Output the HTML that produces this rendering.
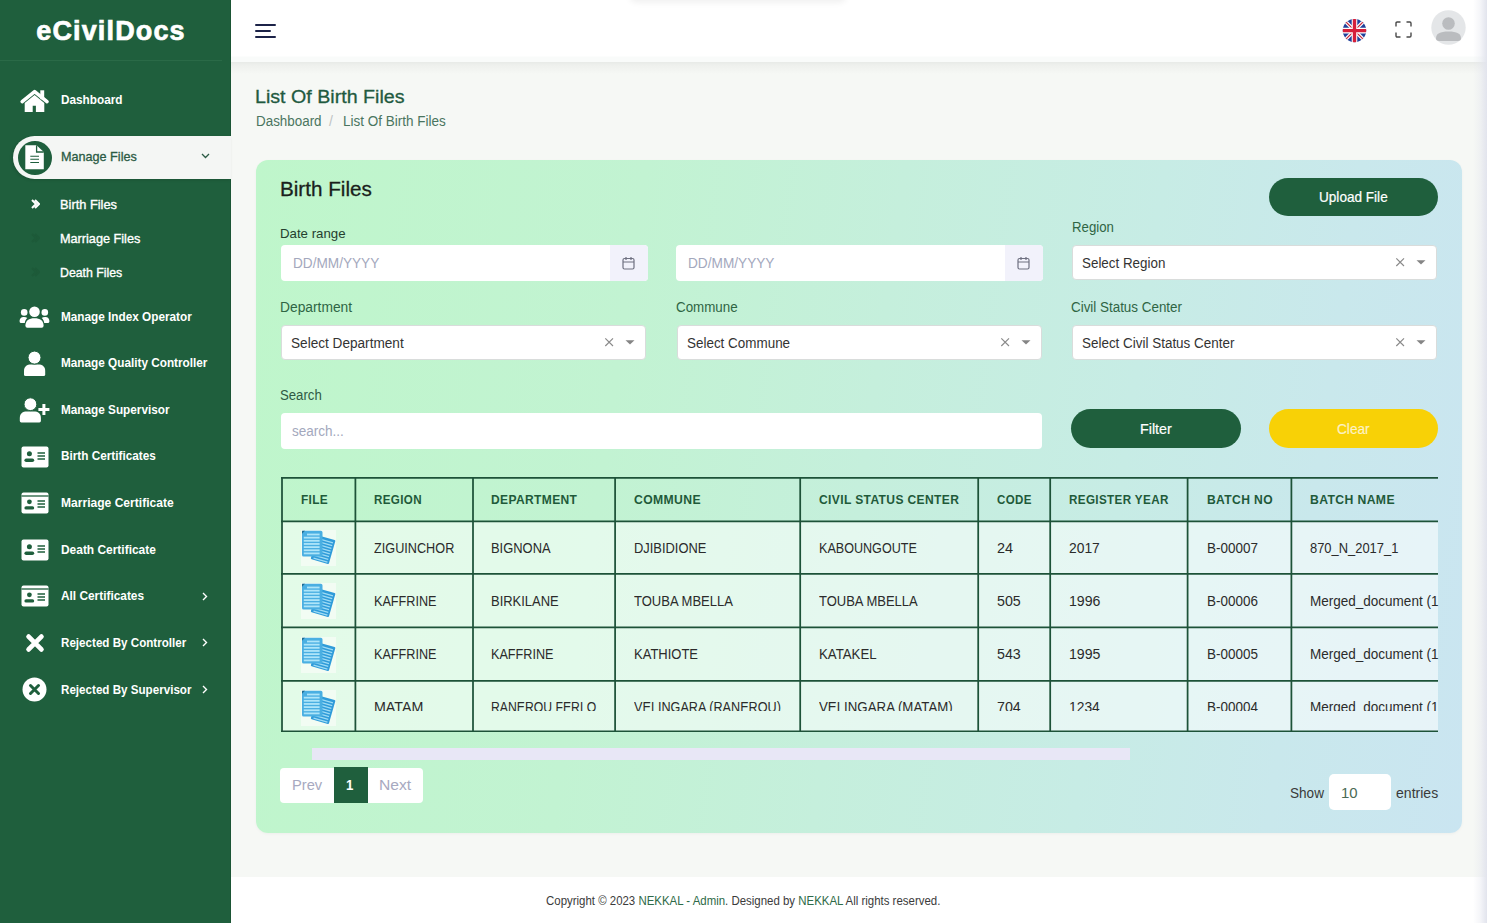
<!DOCTYPE html>
<html><head><meta charset="utf-8">
<style>
*{box-sizing:border-box;margin:0;padding:0}
html,body{width:1487px;height:923px;overflow:hidden;font-family:"Liberation Sans",sans-serif;background:#f6f8f5}
.abs{position:absolute}
#sb{position:absolute;left:0;top:0;width:231px;height:923px;background:#1f5f3d;border-right:1px solid #1b5535}
#logo{position:absolute;left:0;top:0;width:222px;height:61px;border-bottom:1px solid #2a6a47;color:#fff;font-weight:bold;font-size:27px;text-align:center;line-height:63px;letter-spacing:1.15px;-webkit-text-stroke:0.7px #fff}
.mi{position:absolute;left:61px;color:#fff;font-weight:bold;font-size:13px;white-space:nowrap;line-height:16px;transform:scaleX(0.905);transform-origin:0 0}
.sub{position:absolute;left:60px;color:#fff;font-size:13px;white-space:nowrap;line-height:16px;-webkit-text-stroke:0.35px #fff;transform-origin:0 0}
.ic{position:absolute}
#hdr{position:absolute;left:231px;top:0;width:1256px;height:62px;background:linear-gradient(#fff 0,#fff 56px,#f9fbfa 57px,#f9fbfa 62px)}
#hsh{position:absolute;left:231px;top:62px;width:1256px;height:12px;background:linear-gradient(#e7eae7,#eef0ed 3px,#f6f8f5 12px)}
#rstrip{position:absolute;left:1473px;top:0;width:14px;height:923px;background:linear-gradient(90deg,rgba(226,228,237,0),rgba(226,228,237,0.35) 50%,#e2e4ed)}
#card{position:absolute;left:256px;top:160px;width:1206px;height:673px;border-radius:12px;box-shadow:0 1px 3px rgba(0,0,0,0.04);background:linear-gradient(98deg,#bff6cb 0%,#c2f3d2 30%,#c5efdc 50%,#c7ece5 70%,#c9e8ec 85%,#cae5f1 100%)}
.lbl{position:absolute;font-size:14px;color:#2d5a3f;white-space:nowrap;line-height:16px}
.inp{position:absolute;background:#fff;border-radius:4px;height:36px}
.ph{position:absolute;font-size:14px;color:#a3a8bd;line-height:16px;white-space:nowrap}
.sel{position:absolute;background:#fff;border-radius:4px;height:35px;border:1px solid #d9dcdb}
.seltx{position:absolute;left:10px;top:9px;font-size:14px;color:#333;line-height:16px;white-space:nowrap}
.btn{position:absolute;border-radius:20px;color:#fff;font-size:14px;text-align:center;white-space:nowrap}
#tbl{position:absolute;left:281px;top:477px;width:1157px;height:255px;overflow:hidden}
.t{position:absolute;white-space:nowrap;transform-origin:0 0}
#foot{position:absolute;z-index:-0;left:231px;top:877px;width:1256px;height:46px;background:#fff}
</style></head><body>
<div id="sb">
  <div id="logo">eCivilDocs</div>
  <!-- dashboard -->
  <svg class="ic" style="left:16px;top:85px" width="36" height="32" viewBox="0 0 36 32"><rect x="24.3" y="5.3" width="3.9" height="9" fill="#fff"/><path d="M6.2 16.6 L18.6 6.6 L31 16.6" fill="none" stroke="#fff" stroke-width="3.6" stroke-linecap="round" stroke-linejoin="round"/><path d="M8.7 17.9 L18.6 10 L28.3 17.9 V27 H19.9 V20.8 H16.7 V27 H8.7 Z" fill="#fff"/></svg>
  <div class="mi" style="top:92px">Dashboard</div>
  <!-- manage files active -->
  <div class="abs" style="left:13px;top:136px;width:218px;height:43px;background:#f4f6f4;border-radius:22px 0 0 22px;box-shadow:-1px 1px 3px rgba(0,0,0,0.15)"></div>
  <div class="abs" style="left:17.8px;top:140.8px;width:33.8px;height:33.8px;border-radius:50%;background:#1f5f3d"></div>
  <svg class="ic" style="left:24px;top:144px" width="21" height="27" viewBox="0 0 21 27"><path d="M1.3 1.2 H12.6 L19.8 8 V25.3 H1.3 Z" fill="#fff"/><path d="M12.6 1.2 V8 H19.8" fill="none" stroke="#1f5f3d" stroke-width="1.3"/><path d="M6.3 12.2 H15 M6.3 15.2 H15 M6.3 18.5 H15" stroke="#1f5f3d" stroke-width="1.1"/></svg>
  <div class="mi" style="top:149px;color:#2b5b44;font-weight:normal;-webkit-text-stroke:0.3px #2b5b44;transform:scaleX(0.971)">Manage Files</div>
  <svg class="ic" style="left:201px;top:153px" width="9" height="6" viewBox="0 0 9 6"><path d="M1 1 L4.5 4.5 L8 1" fill="none" stroke="#2b5b44" stroke-width="1.3"/></svg>
  <!-- sub -->
  <svg class="ic" style="left:31px;top:199px" width="9" height="10" viewBox="0 0 9 10"><path d="M1 1 L5 5 L1 9 M4 1 L8 5 L4 9" fill="none" stroke="#fff" stroke-width="2"/></svg>
  <div class="sub" style="top:197px;transform:scaleX(0.985)">Birth Files</div>
  <svg class="ic" style="left:31px;top:233px" width="9" height="10" viewBox="0 0 9 10"><path d="M1 1 L5 5 L1 9 M4 1 L8 5 L4 9" fill="none" stroke="#1d5a39" stroke-width="2"/></svg>
  <div class="sub" style="top:231px;transform:scaleX(0.975)">Marriage Files</div>
  <svg class="ic" style="left:31px;top:267px" width="9" height="10" viewBox="0 0 9 10"><path d="M1 1 L5 5 L1 9 M4 1 L8 5 L4 9" fill="none" stroke="#1d5a39" stroke-width="2"/></svg>
  <div class="sub" style="top:265px;transform:scaleX(0.946)">Death Files</div>
  <!-- users -->
  <svg class="ic" style="left:19px;top:305px" width="31" height="24" viewBox="0 0 31 24"><circle cx="15.5" cy="6.7" r="5.3" fill="#fff"/><path d="M6.4 20.7 C6.4 15.5 10 13.2 15.5 13.2 C21 13.2 24.6 15.5 24.6 20.7 Q24.6 22.7 22.6 22.7 H8.4 Q6.4 22.7 6.4 20.7 Z" fill="#fff"/><circle cx="5.2" cy="7.4" r="3.3" fill="#fff"/><circle cx="25.8" cy="7.4" r="3.3" fill="#fff"/><path d="M0.6 16.5 C0.6 13.2 2.3 12 5 12 C6.4 12 7.5 12.3 8.3 13 C6.8 14.3 6 15.8 5.8 18.1 H2.2 Q0.6 18.1 0.6 16.5 Z" fill="#fff"/><path d="M30.4 16.5 C30.4 13.2 28.7 12 26 12 C24.6 12 23.5 12.3 22.7 13 C24.2 14.3 25 15.8 25.2 18.1 H28.8 Q30.4 18.1 30.4 16.5 Z" fill="#fff"/></svg>
  <div class="mi" style="top:309px">Manage Index Operator</div>
  <!-- user -->
  <svg class="ic" style="left:23px;top:351px" width="23" height="26" viewBox="0 0 23 26"><path d="M1 20 C1 15.5 4 13.6 8 13.6 H15.2 C19.2 13.6 22.2 15.5 22.2 20 V23.5 Q22.2 25 20.7 25 H2.5 Q1 25 1 23.5 Z" fill="#fff"/><circle cx="11.5" cy="6.6" r="6.5" fill="#fff" stroke="#1f5f3d" stroke-width="1"/></svg>
  <div class="mi" style="top:355px">Manage Quality Controller</div>
  <!-- user plus -->
  <svg class="ic" style="left:19px;top:397px" width="32" height="27" viewBox="0 0 32 27"><path d="M0.8 21 C0.8 16.4 3.8 14.5 7.8 14.5 H14.9 C18.9 14.5 21.9 16.4 21.9 21 V24 Q21.9 25.4 20.4 25.4 H2.3 Q0.8 25.4 0.8 24 Z" fill="#fff"/><circle cx="11.4" cy="7.2" r="6.4" fill="#fff" stroke="#1f5f3d" stroke-width="1"/><path d="M24.9 7 V18 M19.4 12.5 H30.4" stroke="#fff" stroke-width="3"/></svg>
  <div class="mi" style="top:402px">Manage Supervisor</div>
  <!-- id cards -->
  <svg class="ic" style="left:21px;top:446px" width="28" height="22" viewBox="0 0 28 22"><rect x="0.5" y="0.5" width="27" height="21" rx="2" fill="#fff"/><circle cx="8.4" cy="7.8" r="2.5" fill="#1f5f3d"/><rect x="3.4" y="12.5" width="9.8" height="3.6" rx="1.8" fill="#1f5f3d"/><path d="M16.5 7 H24 M16.5 10 H24 M16.5 13 H24" stroke="#1f5f3d" stroke-width="1.4"/></svg>
  <div class="mi" style="top:448px">Birth Certificates</div>
  <svg class="ic" style="left:21px;top:492px" width="28" height="22" viewBox="0 0 28 22"><rect x="0.5" y="0.5" width="27" height="21" rx="2" fill="#fff"/><path d="M0.5 4 H27.5" stroke="#1f5f3d" stroke-width="1.3"/><circle cx="8.4" cy="9.8" r="2.4" fill="#1f5f3d"/><rect x="3.4" y="14.2" width="9.8" height="3.4" rx="1.7" fill="#1f5f3d"/><path d="M16.5 9 H24 M16.5 12 H24 M16.5 15 H24" stroke="#1f5f3d" stroke-width="1.4"/></svg>
  <div class="mi" style="top:495px;transform:scaleX(0.928)">Marriage Certificate</div>
  <svg class="ic" style="left:21px;top:539px" width="28" height="22" viewBox="0 0 28 22"><rect x="0.5" y="0.5" width="27" height="21" rx="2" fill="#fff"/><circle cx="8.4" cy="7.8" r="2.5" fill="#1f5f3d"/><rect x="3.4" y="12.5" width="9.8" height="3.6" rx="1.8" fill="#1f5f3d"/><path d="M16.5 7 H24 M16.5 10 H24 M16.5 13 H24" stroke="#1f5f3d" stroke-width="1.4"/></svg>
  <div class="mi" style="top:542px;transform:scaleX(0.918)">Death Certificate</div>
  <svg class="ic" style="left:21px;top:585px" width="28" height="22" viewBox="0 0 28 22"><rect x="0.5" y="0.5" width="27" height="21" rx="2" fill="#fff"/><path d="M0.5 4 H27.5" stroke="#1f5f3d" stroke-width="1.3"/><circle cx="8.4" cy="9.8" r="2.4" fill="#1f5f3d"/><rect x="3.4" y="14.2" width="9.8" height="3.4" rx="1.7" fill="#1f5f3d"/><path d="M16.5 9 H24 M16.5 12 H24 M16.5 15 H24" stroke="#1f5f3d" stroke-width="1.4"/></svg>
  <div class="mi" style="top:588px;transform:scaleX(0.912)">All Certificates</div>
  <svg class="ic" style="left:202px;top:592px" width="6" height="9" viewBox="0 0 6 9"><path d="M1 1 L4.5 4.5 L1 8" fill="none" stroke="#fff" stroke-width="1.4"/></svg>
  <svg class="ic" style="left:25px;top:633px" width="20" height="20" viewBox="0 0 20 20"><path d="M3.6 3.6 L16.4 16.4 M16.4 3.6 L3.6 16.4" stroke="#fff" stroke-width="4.8" stroke-linecap="round"/></svg>
  <div class="mi" style="top:635px;transform:scaleX(0.894)">Rejected By Controller</div>
  <svg class="ic" style="left:202px;top:638px" width="6" height="9" viewBox="0 0 6 9"><path d="M1 1 L4.5 4.5 L1 8" fill="none" stroke="#fff" stroke-width="1.4"/></svg>
  <svg class="ic" style="left:22px;top:677px" width="25" height="25" viewBox="0 0 25 25"><circle cx="12.5" cy="12.5" r="12" fill="#fff"/><path d="M8.5 8.5 L16.5 16.5 M16.5 8.5 L8.5 16.5" stroke="#1f5f3d" stroke-width="3" stroke-linecap="round"/></svg>
  <div class="mi" style="top:682px;transform:scaleX(0.894)">Rejected By Supervisor</div>
  <svg class="ic" style="left:202px;top:685px" width="6" height="9" viewBox="0 0 6 9"><path d="M1 1 L4.5 4.5 L1 8" fill="none" stroke="#fff" stroke-width="1.4"/></svg>
</div>
<div id="hsh"></div><div id="hdr"></div>
<div class="abs" style="left:630px;top:-12px;width:216px;height:12px;border-radius:8px;box-shadow:0 2px 7px rgba(0,0,0,0.07);background:#fff"></div>
<svg class="abs" style="left:255px;top:23px" width="21" height="16" viewBox="0 0 21 16"><path d="M1 2 H20 M1 8 H15 M1 14 H20" stroke="#1c2348" stroke-width="2" stroke-linecap="round"/></svg>
<svg class="abs" style="left:1342px;top:18px" width="25" height="25" viewBox="0 0 25 25"><defs><clipPath id="fc"><circle cx="12.5" cy="12.6" r="11.7"/></clipPath></defs><g clip-path="url(#fc)"><rect width="25" height="25" fill="#21409a"/><path d="M0 0 L25 25 M25 0 L0 25" stroke="#fff" stroke-width="3.6"/><path d="M0 0 L25 25 M25 0 L0 25" stroke="#c8283e" stroke-width="1.2"/><path d="M12.5 0 V25 M0 12.6 H25" stroke="#fff" stroke-width="5.6"/><path d="M12.5 0 V25 M0 12.6 H25" stroke="#d61f3a" stroke-width="3.4"/></g></svg>
<svg class="abs" style="left:1395px;top:21px" width="17" height="17" viewBox="0 0 17 17"><path d="M1 5.5 V2.2 Q1 1 2.2 1 H5.5 M11.5 1 H14.8 Q16 1 16 2.2 V5.5 M16 11.5 V14.8 Q16 16 14.8 16 H11.5 M5.5 16 H2.2 Q1 16 1 14.8 V11.5" fill="none" stroke="#4a4a4a" stroke-width="1.4"/></svg>
<svg class="abs" style="left:1431px;top:10px" width="35" height="35" viewBox="0 0 35 35"><circle cx="17.5" cy="17.5" r="17.2" fill="#e4e6e8"/><circle cx="17.5" cy="13.5" r="6.3" fill="#babcbf"/><path d="M5 28.5 C5 23.5 9 21.5 17.5 21.5 C26 21.5 30 23.5 30 28.5 C30 30 29 31 27 31 H8 C6 31 5 30 5 28.5 Z" fill="#babcbf"/></svg>
<div id="foot"></div>
<div id="card"></div>
<div class="abs" style="left:1269px;top:178px;width:169px;height:38px;border-radius:19px;background:#1f5f3d"></div>
<!-- date inputs -->
<div class="abs" style="left:281px;top:245px;width:367px;height:36px;border-radius:4px;background:#fff;overflow:hidden"><div class="abs" style="left:329px;top:0;width:38px;height:36px;background:#f2f2fb"></div></div>
<svg class="abs" style="left:622px;top:256px" width="13" height="14" viewBox="0 0 13 14"><rect x="1" y="2.5" width="11" height="10.5" rx="1.5" fill="none" stroke="#6e7080" stroke-width="1.2"/><path d="M1 6 H12 M4 1 V4 M9 1 V4" stroke="#6e7080" stroke-width="1.2"/></svg>
<div class="abs" style="left:676px;top:245px;width:367px;height:36px;border-radius:4px;background:#fff;overflow:hidden"><div class="abs" style="left:329px;top:0;width:38px;height:36px;background:#f2f2fb"></div></div>
<svg class="abs" style="left:1017px;top:256px" width="13" height="14" viewBox="0 0 13 14"><rect x="1" y="2.5" width="11" height="10.5" rx="1.5" fill="none" stroke="#6e7080" stroke-width="1.2"/><path d="M1 6 H12 M4 1 V4 M9 1 V4" stroke="#6e7080" stroke-width="1.2"/></svg>
<!-- selects -->
<div class="sel" style="left:1072px;top:245px;width:365px;height:35px"></div>
<div class="sel" style="left:281px;top:325px;width:365px;height:35px"></div>
<div class="sel" style="left:677px;top:325px;width:365px;height:35px"></div>
<div class="sel" style="left:1072px;top:325px;width:365px;height:35px"></div>
<svg class="abs" style="left:1394px;top:256px" width="12" height="12" viewBox="0 0 12 12"><path d="M2.3 2.3 L10 10 M10 2.3 L2.3 10" stroke="#8a8a8a" stroke-width="1.15"/></svg><svg class="abs" style="left:1416px;top:260px" width="10" height="5" viewBox="0 0 10 5"><path d="M0.5 0.3 H9.5 L5 4.6 Z" fill="#858585"/></svg><svg class="abs" style="left:603px;top:336px" width="12" height="12" viewBox="0 0 12 12"><path d="M2.3 2.3 L10 10 M10 2.3 L2.3 10" stroke="#8a8a8a" stroke-width="1.15"/></svg><svg class="abs" style="left:625px;top:340px" width="10" height="5" viewBox="0 0 10 5"><path d="M0.5 0.3 H9.5 L5 4.6 Z" fill="#858585"/></svg><svg class="abs" style="left:999px;top:336px" width="12" height="12" viewBox="0 0 12 12"><path d="M2.3 2.3 L10 10 M10 2.3 L2.3 10" stroke="#8a8a8a" stroke-width="1.15"/></svg><svg class="abs" style="left:1021px;top:340px" width="10" height="5" viewBox="0 0 10 5"><path d="M0.5 0.3 H9.5 L5 4.6 Z" fill="#858585"/></svg><svg class="abs" style="left:1394px;top:336px" width="12" height="12" viewBox="0 0 12 12"><path d="M2.3 2.3 L10 10 M10 2.3 L2.3 10" stroke="#8a8a8a" stroke-width="1.15"/></svg><svg class="abs" style="left:1416px;top:340px" width="10" height="5" viewBox="0 0 10 5"><path d="M0.5 0.3 H9.5 L5 4.6 Z" fill="#858585"/></svg>
<!-- search -->
<div class="abs" style="left:281px;top:413px;width:761px;height:36px;border-radius:4px;background:#fff"></div>
<div class="abs" style="left:1071px;top:409px;width:170px;height:39px;border-radius:20px;background:#1f5f3d"></div>
<div class="abs" style="left:1269px;top:409px;width:169px;height:39px;border-radius:20px;background:#f8d106"></div>
<!-- table -->
<div class="abs" style="left:281px;top:477px;width:1157px;height:255px;overflow:hidden">
  <div class="abs" style="left:0;top:44px;width:1157px;height:210px;background:rgba(255,255,255,0.55)"></div>
  <svg class="abs" style="left:0;top:0" width="1157.5" height="255" viewBox="281 477 1157.5 255"><path d="M282 476 V733" stroke="#1d5238" stroke-width="1.75"/><path d="M355.4 476 V733" stroke="#1d5238" stroke-width="1.75"/><path d="M473 476 V733" stroke="#1d5238" stroke-width="1.75"/><path d="M615.1 476 V733" stroke="#1d5238" stroke-width="1.75"/><path d="M800.2 476 V733" stroke="#1d5238" stroke-width="1.75"/><path d="M978.2 476 V733" stroke="#1d5238" stroke-width="1.75"/><path d="M1050.2 476 V733" stroke="#1d5238" stroke-width="1.75"/><path d="M1187.6 476 V733" stroke="#1d5238" stroke-width="1.75"/><path d="M1291.4 476 V733" stroke="#1d5238" stroke-width="1.75"/><path d="M280 477.9 H1440" stroke="#1d5238" stroke-width="1.75"/><path d="M280 521.3 H1440" stroke="#1d5238" stroke-width="1.75"/><path d="M280 573.9 H1440" stroke="#1d5238" stroke-width="1.75"/><path d="M280 627.3 H1440" stroke="#1d5238" stroke-width="1.75"/><path d="M280 680.8 H1440" stroke="#1d5238" stroke-width="1.75"/><path d="M280 731.3 H1440" stroke="#1d5238" stroke-width="1.75"/></svg>
</div>
<svg class="abs" style="left:301px;top:530.0px" width="35" height="36" viewBox="0 0 35 36"><rect width="35" height="36" fill="#f2fcf3"/><g transform="translate(16.5,5.1) rotate(16)"><rect width="18.8" height="24.9" rx="1" fill="#2f9bd9"/><path d="M2.5 3.20 H17" stroke="#9fdcf5" stroke-width="1.3"/><path d="M2.5 6.05 H17" stroke="#9fdcf5" stroke-width="1.3"/><path d="M2.5 8.90 H17" stroke="#9fdcf5" stroke-width="1.3"/><path d="M2.5 11.75 H17" stroke="#9fdcf5" stroke-width="1.3"/><path d="M2.5 14.60 H17" stroke="#9fdcf5" stroke-width="1.3"/><path d="M2.5 17.45 H17" stroke="#9fdcf5" stroke-width="1.3"/><path d="M2.5 20.30 H17" stroke="#9fdcf5" stroke-width="1.3"/><path d="M2.5 23.15 H17" stroke="#9fdcf5" stroke-width="1.3"/></g><rect x="1" y="0.8" width="20.5" height="25.7" rx="1.6" fill="#4aafe2"/><path d="M6 4.50 H18.6" stroke="#aee5f9" stroke-width="1.8"/><path d="M2.8 7.65 H18.6" stroke="#aee5f9" stroke-width="1.8"/><path d="M2.8 10.80 H18.6" stroke="#aee5f9" stroke-width="1.8"/><path d="M2.8 13.95 H18.6" stroke="#aee5f9" stroke-width="1.8"/><path d="M2.8 17.10 H18.6" stroke="#aee5f9" stroke-width="1.8"/><path d="M2.8 20.25 H18.6" stroke="#aee5f9" stroke-width="1.8"/><path d="M2.8 23.40 H18.6" stroke="#aee5f9" stroke-width="1.8"/><path d="M1 0.8 H4 L1 3.8 Z" fill="#1f6d92"/></svg><svg class="abs" style="left:301px;top:583.0px" width="35" height="36" viewBox="0 0 35 36"><rect width="35" height="36" fill="#f2fcf3"/><g transform="translate(16.5,5.1) rotate(16)"><rect width="18.8" height="24.9" rx="1" fill="#2f9bd9"/><path d="M2.5 3.20 H17" stroke="#9fdcf5" stroke-width="1.3"/><path d="M2.5 6.05 H17" stroke="#9fdcf5" stroke-width="1.3"/><path d="M2.5 8.90 H17" stroke="#9fdcf5" stroke-width="1.3"/><path d="M2.5 11.75 H17" stroke="#9fdcf5" stroke-width="1.3"/><path d="M2.5 14.60 H17" stroke="#9fdcf5" stroke-width="1.3"/><path d="M2.5 17.45 H17" stroke="#9fdcf5" stroke-width="1.3"/><path d="M2.5 20.30 H17" stroke="#9fdcf5" stroke-width="1.3"/><path d="M2.5 23.15 H17" stroke="#9fdcf5" stroke-width="1.3"/></g><rect x="1" y="0.8" width="20.5" height="25.7" rx="1.6" fill="#4aafe2"/><path d="M6 4.50 H18.6" stroke="#aee5f9" stroke-width="1.8"/><path d="M2.8 7.65 H18.6" stroke="#aee5f9" stroke-width="1.8"/><path d="M2.8 10.80 H18.6" stroke="#aee5f9" stroke-width="1.8"/><path d="M2.8 13.95 H18.6" stroke="#aee5f9" stroke-width="1.8"/><path d="M2.8 17.10 H18.6" stroke="#aee5f9" stroke-width="1.8"/><path d="M2.8 20.25 H18.6" stroke="#aee5f9" stroke-width="1.8"/><path d="M2.8 23.40 H18.6" stroke="#aee5f9" stroke-width="1.8"/><path d="M1 0.8 H4 L1 3.8 Z" fill="#1f6d92"/></svg><svg class="abs" style="left:301px;top:636.5px" width="35" height="36" viewBox="0 0 35 36"><rect width="35" height="36" fill="#f2fcf3"/><g transform="translate(16.5,5.1) rotate(16)"><rect width="18.8" height="24.9" rx="1" fill="#2f9bd9"/><path d="M2.5 3.20 H17" stroke="#9fdcf5" stroke-width="1.3"/><path d="M2.5 6.05 H17" stroke="#9fdcf5" stroke-width="1.3"/><path d="M2.5 8.90 H17" stroke="#9fdcf5" stroke-width="1.3"/><path d="M2.5 11.75 H17" stroke="#9fdcf5" stroke-width="1.3"/><path d="M2.5 14.60 H17" stroke="#9fdcf5" stroke-width="1.3"/><path d="M2.5 17.45 H17" stroke="#9fdcf5" stroke-width="1.3"/><path d="M2.5 20.30 H17" stroke="#9fdcf5" stroke-width="1.3"/><path d="M2.5 23.15 H17" stroke="#9fdcf5" stroke-width="1.3"/></g><rect x="1" y="0.8" width="20.5" height="25.7" rx="1.6" fill="#4aafe2"/><path d="M6 4.50 H18.6" stroke="#aee5f9" stroke-width="1.8"/><path d="M2.8 7.65 H18.6" stroke="#aee5f9" stroke-width="1.8"/><path d="M2.8 10.80 H18.6" stroke="#aee5f9" stroke-width="1.8"/><path d="M2.8 13.95 H18.6" stroke="#aee5f9" stroke-width="1.8"/><path d="M2.8 17.10 H18.6" stroke="#aee5f9" stroke-width="1.8"/><path d="M2.8 20.25 H18.6" stroke="#aee5f9" stroke-width="1.8"/><path d="M2.8 23.40 H18.6" stroke="#aee5f9" stroke-width="1.8"/><path d="M1 0.8 H4 L1 3.8 Z" fill="#1f6d92"/></svg><svg class="abs" style="left:301px;top:689.5px" width="35" height="36" viewBox="0 0 35 36"><rect width="35" height="36" fill="#f2fcf3"/><g transform="translate(16.5,5.1) rotate(16)"><rect width="18.8" height="24.9" rx="1" fill="#2f9bd9"/><path d="M2.5 3.20 H17" stroke="#9fdcf5" stroke-width="1.3"/><path d="M2.5 6.05 H17" stroke="#9fdcf5" stroke-width="1.3"/><path d="M2.5 8.90 H17" stroke="#9fdcf5" stroke-width="1.3"/><path d="M2.5 11.75 H17" stroke="#9fdcf5" stroke-width="1.3"/><path d="M2.5 14.60 H17" stroke="#9fdcf5" stroke-width="1.3"/><path d="M2.5 17.45 H17" stroke="#9fdcf5" stroke-width="1.3"/><path d="M2.5 20.30 H17" stroke="#9fdcf5" stroke-width="1.3"/><path d="M2.5 23.15 H17" stroke="#9fdcf5" stroke-width="1.3"/></g><rect x="1" y="0.8" width="20.5" height="25.7" rx="1.6" fill="#4aafe2"/><path d="M6 4.50 H18.6" stroke="#aee5f9" stroke-width="1.8"/><path d="M2.8 7.65 H18.6" stroke="#aee5f9" stroke-width="1.8"/><path d="M2.8 10.80 H18.6" stroke="#aee5f9" stroke-width="1.8"/><path d="M2.8 13.95 H18.6" stroke="#aee5f9" stroke-width="1.8"/><path d="M2.8 17.10 H18.6" stroke="#aee5f9" stroke-width="1.8"/><path d="M2.8 20.25 H18.6" stroke="#aee5f9" stroke-width="1.8"/><path d="M2.8 23.40 H18.6" stroke="#aee5f9" stroke-width="1.8"/><path d="M1 0.8 H4 L1 3.8 Z" fill="#1f6d92"/></svg>
<!-- scrollbar -->
<div class="abs" style="left:312px;top:748px;width:818px;height:11.6px;background:#e8e7f6"></div>
<!-- pagination -->
<div class="abs" style="left:280px;top:768px;width:143px;height:35px;border-radius:4px;background:#fff"></div>
<div class="abs" style="left:334px;top:767px;width:34px;height:36px;background:#1f5f3d"></div>
<div class="abs" style="left:1329px;top:774px;width:62px;height:36px;border-radius:5px;background:#fff"></div>
<div class="t" id="t0" style="left:254.92px;top:87.79px;font-size:18.8px;line-height:18.8px;color:#1f5a40;transform:scaleX(1.0461);-webkit-text-stroke:0.3px #1f5a40;">List Of Birth Files</div>
<div class="t" id="t1" style="left:256.13px;top:114.45px;font-size:14px;line-height:14px;color:#4a7560;transform:scaleX(0.9573);">Dashboard</div>
<div class="t" id="t2" style="left:329.10px;top:114.45px;font-size:14px;line-height:14px;color:#c0c4c4;">/</div>
<div class="t" id="t3" style="left:343.23px;top:114.45px;font-size:14px;line-height:14px;color:#4a7560;transform:scaleX(0.9642);">List Of Birth Files</div>
<div class="t" id="t4" style="left:280.27px;top:178.22px;font-size:21px;line-height:21px;color:#1a1f1c;transform:scaleX(0.9839);-webkit-text-stroke:0.3px #1a1f1c;">Birth Files</div>
<div class="t" id="t5" style="left:1319.32px;top:190.33px;font-size:14.5px;line-height:14.5px;color:#ffffff;transform:scaleX(0.9365);-webkit-text-stroke:0.2px #ffffff;">Upload File</div>
<div class="t" id="t6" style="left:280.24px;top:227.27px;font-size:13.5px;line-height:13.5px;color:#24402f;transform:scaleX(0.9815);">Date range</div>
<div class="t" id="t7" style="left:292.52px;top:255.75px;font-size:14px;line-height:14px;color:#a3a8bd;transform:scaleX(0.9730);">DD/MM/YYYY</div>
<div class="t" id="t8" style="left:688.12px;top:255.75px;font-size:14px;line-height:14px;color:#a3a8bd;transform:scaleX(0.9752);">DD/MM/YYYY</div>
<div class="t" id="t9" style="left:1071.54px;top:219.95px;font-size:14px;line-height:14px;color:#2f6544;transform:scaleX(0.9432);">Region</div>
<div class="t" id="t10" style="left:1082.33px;top:255.95px;font-size:14px;line-height:14px;color:#333333;transform:scaleX(0.9564);">Select Region</div>
<div class="t" id="t11" style="left:279.61px;top:300.15px;font-size:14px;line-height:14px;color:#2f6544;transform:scaleX(0.9856);">Department</div>
<div class="t" id="t12" style="left:675.63px;top:300.15px;font-size:14px;line-height:14px;color:#2f6544;transform:scaleX(0.9550);">Commune</div>
<div class="t" id="t13" style="left:1071.33px;top:300.15px;font-size:14px;line-height:14px;color:#2f6544;transform:scaleX(0.9572);">Civil Status Center</div>
<div class="t" id="t14" style="left:291.12px;top:336.35px;font-size:14px;line-height:14px;color:#333333;transform:scaleX(0.9718);">Select Department</div>
<div class="t" id="t15" style="left:686.63px;top:336.35px;font-size:14px;line-height:14px;color:#333333;transform:scaleX(0.9600);">Select Commune</div>
<div class="t" id="t16" style="left:1082.33px;top:336.35px;font-size:14px;line-height:14px;color:#333333;transform:scaleX(0.9600);">Select Civil Status Center</div>
<div class="t" id="t17" style="left:280.14px;top:387.75px;font-size:14px;line-height:14px;color:#2f5a44;transform:scaleX(0.9413);">Search</div>
<div class="t" id="t18" style="left:291.92px;top:424.15px;font-size:14px;line-height:14px;color:#a3a8bd;transform:scaleX(0.9661);">search...</div>
<div class="t" id="t19" style="left:1139.99px;top:421.53px;font-size:14.5px;line-height:14.5px;color:#ffffff;transform:scaleX(0.9847);-webkit-text-stroke:0.2px #ffffff;">Filter</div>
<div class="t" id="t20" style="left:1336.92px;top:421.53px;font-size:14.5px;line-height:14.5px;color:#fdf2c4;transform:scaleX(0.9404);-webkit-text-stroke:0.2px #fdf2c4;">Clear</div>
<div class="t" id="t62" style="left:291.97px;top:777.45px;font-size:15.3px;line-height:15.3px;color:#a7a9c0;transform:scaleX(0.9593);">Prev</div>
<div class="t" id="t63" style="left:345.74px;top:777.45px;font-size:15.3px;line-height:15.3px;color:#ffffff;font-weight:bold;transform:scaleX(0.8640);">1</div>
<div class="t" id="t64" style="left:378.72px;top:777.45px;font-size:15.3px;line-height:15.3px;color:#a7a9c0;transform:scaleX(1.0222);">Next</div>
<div class="t" id="t65" style="left:1290.32px;top:785.63px;font-size:14.5px;line-height:14.5px;color:#3a3a3a;transform:scaleX(0.9368);">Show</div>
<div class="t" id="t66" style="left:1340.55px;top:785.63px;font-size:14.5px;line-height:14.5px;color:#4a6a55;transform:scaleX(1.0280);">10</div>
<div class="t" id="t67" style="left:1396.30px;top:785.63px;font-size:14.5px;line-height:14.5px;color:#3a3a3a;transform:scaleX(0.9700);">entries</div>
<div class="t" id="t68" style="left:545.83px;top:893.70px;font-size:13px;line-height:13px;color:#3b3b3b;transform:scaleX(0.8802);">Copyright © 2023 <span style="color:#2d6a47">NEKKAL - Admin</span>. Designed by <span style="color:#2d6a47">NEKKAL</span> All rights reserved.</div>
<div class="abs" style="left:281px;top:477px;width:1157.5px;height:204px;overflow:hidden"><div class="abs" style="left:-281px;top:-477px;width:1487px;height:923px"><div class="t" id="t21" style="left:301.31px;top:492.60px;font-size:13px;line-height:13px;color:#1f5a3a;font-weight:bold;letter-spacing:0.4px;transform:scaleX(0.9108);">FILE</div>
<div class="t" id="t22" style="left:373.72px;top:492.60px;font-size:13px;line-height:13px;color:#1f5a3a;font-weight:bold;letter-spacing:0.4px;transform:scaleX(0.8919);">REGION</div>
<div class="t" id="t23" style="left:491.40px;top:492.60px;font-size:13px;line-height:13px;color:#1f5a3a;font-weight:bold;letter-spacing:0.4px;transform:scaleX(0.9252);">DEPARTMENT</div>
<div class="t" id="t24" style="left:634.29px;top:492.60px;font-size:13px;line-height:13px;color:#1f5a3a;font-weight:bold;letter-spacing:0.4px;transform:scaleX(0.9376);">COMMUNE</div>
<div class="t" id="t25" style="left:818.90px;top:492.60px;font-size:13px;line-height:13px;color:#1f5a3a;font-weight:bold;letter-spacing:0.4px;transform:scaleX(0.9273);">CIVIL STATUS CENTER</div>
<div class="t" id="t26" style="left:996.72px;top:492.60px;font-size:13px;line-height:13px;color:#1f5a3a;font-weight:bold;letter-spacing:0.4px;transform:scaleX(0.8878);">CODE</div>
<div class="t" id="t27" style="left:1069.42px;top:492.60px;font-size:13px;line-height:13px;color:#1f5a3a;font-weight:bold;letter-spacing:0.4px;transform:scaleX(0.8969);">REGISTER YEAR</div>
<div class="t" id="t28" style="left:1206.79px;top:492.60px;font-size:13px;line-height:13px;color:#1f5a3a;font-weight:bold;letter-spacing:0.4px;transform:scaleX(0.9308);">BATCH NO</div>
<div class="t" id="t29" style="left:1310.49px;top:492.60px;font-size:13px;line-height:13px;color:#1f5a3a;font-weight:bold;letter-spacing:0.4px;transform:scaleX(0.9395);">BATCH NAME</div>
<div class="t" id="t30" style="left:373.67px;top:540.65px;font-size:14px;line-height:14px;color:#2b2b2b;transform:scaleX(0.9057);">ZIGUINCHOR</div>
<div class="t" id="t31" style="left:491.35px;top:540.65px;font-size:14px;line-height:14px;color:#2b2b2b;transform:scaleX(0.9234);">BIGNONA</div>
<div class="t" id="t32" style="left:634.26px;top:540.65px;font-size:14px;line-height:14px;color:#2b2b2b;transform:scaleX(0.9205);">DJIBIDIONE</div>
<div class="t" id="t33" style="left:818.87px;top:540.65px;font-size:14px;line-height:14px;color:#2b2b2b;transform:scaleX(0.8981);">KABOUNGOUTE</div>
<div class="t" id="t34" style="left:996.58px;top:540.65px;font-size:14px;line-height:14px;color:#2b2b2b;transform:scaleX(1.0306);">24</div>
<div class="t" id="t35" style="left:1069.31px;top:540.65px;font-size:14px;line-height:14px;color:#2b2b2b;transform:scaleX(0.9888);">2017</div>
<div class="t" id="t36" style="left:1206.73px;top:540.65px;font-size:14px;line-height:14px;color:#2b2b2b;transform:scaleX(0.9611);">B-00007</div>
<div class="t" id="t37" style="left:1310.45px;top:540.65px;font-size:14px;line-height:14px;color:#2b2b2b;transform:scaleX(0.9224);">870_N_2017_1</div>
<div class="t" id="t38" style="left:373.67px;top:593.95px;font-size:14px;line-height:14px;color:#2b2b2b;transform:scaleX(0.9029);">KAFFRINE</div>
<div class="t" id="t39" style="left:491.35px;top:593.95px;font-size:14px;line-height:14px;color:#2b2b2b;transform:scaleX(0.9247);">BIRKILANE</div>
<div class="t" id="t40" style="left:634.25px;top:593.95px;font-size:14px;line-height:14px;color:#2b2b2b;transform:scaleX(0.9304);">TOUBA MBELLA</div>
<div class="t" id="t41" style="left:818.85px;top:593.95px;font-size:14px;line-height:14px;color:#2b2b2b;transform:scaleX(0.9285);">TOUBA MBELLA</div>
<div class="t" id="t42" style="left:996.59px;top:593.95px;font-size:14px;line-height:14px;color:#2b2b2b;transform:scaleX(1.0162);">505</div>
<div class="t" id="t43" style="left:1069.29px;top:593.95px;font-size:14px;line-height:14px;color:#2b2b2b;transform:scaleX(1.0088);">1996</div>
<div class="t" id="t44" style="left:1206.73px;top:593.95px;font-size:14px;line-height:14px;color:#2b2b2b;transform:scaleX(0.9611);">B-00006</div>
<div class="t" id="t45" style="left:1310.42px;top:593.95px;font-size:14px;line-height:14px;color:#2b2b2b;transform:scaleX(0.9650);">Merged_document (1</div>
<div class="t" id="t46" style="left:373.67px;top:647.45px;font-size:14px;line-height:14px;color:#2b2b2b;transform:scaleX(0.9029);">KAFFRINE</div>
<div class="t" id="t47" style="left:491.37px;top:647.45px;font-size:14px;line-height:14px;color:#2b2b2b;transform:scaleX(0.9029);">KAFFRINE</div>
<div class="t" id="t48" style="left:634.25px;top:647.45px;font-size:14px;line-height:14px;color:#2b2b2b;transform:scaleX(0.9285);">KATHIOTE</div>
<div class="t" id="t49" style="left:818.84px;top:647.45px;font-size:14px;line-height:14px;color:#2b2b2b;transform:scaleX(0.9460);">KATAKEL</div>
<div class="t" id="t50" style="left:996.59px;top:647.45px;font-size:14px;line-height:14px;color:#2b2b2b;transform:scaleX(1.0162);">543</div>
<div class="t" id="t51" style="left:1069.29px;top:647.45px;font-size:14px;line-height:14px;color:#2b2b2b;transform:scaleX(1.0088);">1995</div>
<div class="t" id="t52" style="left:1206.73px;top:647.45px;font-size:14px;line-height:14px;color:#2b2b2b;transform:scaleX(0.9611);">B-00005</div>
<div class="t" id="t53" style="left:1310.42px;top:647.45px;font-size:14px;line-height:14px;color:#2b2b2b;transform:scaleX(0.9650);">Merged_document (1</div></div></div>
<div class="abs" style="left:281px;top:681px;width:1157.5px;height:29.6px;overflow:hidden"><div class="abs" style="left:-281px;top:-681px;width:1487px;height:923px"><div class="t" id="t54" style="left:373.59px;top:700.15px;font-size:14px;line-height:14px;color:#2b2b2b;transform:scaleX(1.0176);">MATAM</div>
<div class="t" id="t55" style="left:491.39px;top:700.15px;font-size:14px;line-height:14px;color:#2b2b2b;transform:scaleX(0.8723);">RANEROU FERLO</div>
<div class="t" id="t56" style="left:634.27px;top:700.15px;font-size:14px;line-height:14px;color:#2b2b2b;transform:scaleX(0.9036);">VELINGARA (RANEROU)</div>
<div class="t" id="t57" style="left:818.84px;top:700.15px;font-size:14px;line-height:14px;color:#2b2b2b;transform:scaleX(0.9482);">VELINGARA (MATAM)</div>
<div class="t" id="t58" style="left:996.59px;top:700.15px;font-size:14px;line-height:14px;color:#2b2b2b;transform:scaleX(1.0162);">704</div>
<div class="t" id="t59" style="left:1069.31px;top:700.15px;font-size:14px;line-height:14px;color:#2b2b2b;transform:scaleX(0.9888);">1234</div>
<div class="t" id="t60" style="left:1206.73px;top:700.15px;font-size:14px;line-height:14px;color:#2b2b2b;transform:scaleX(0.9611);">B-00004</div>
<div class="t" id="t61" style="left:1310.42px;top:700.15px;font-size:14px;line-height:14px;color:#2b2b2b;transform:scaleX(0.9650);">Merged_document (1</div></div></div>
<div id="rstrip"></div>
</body></html>
